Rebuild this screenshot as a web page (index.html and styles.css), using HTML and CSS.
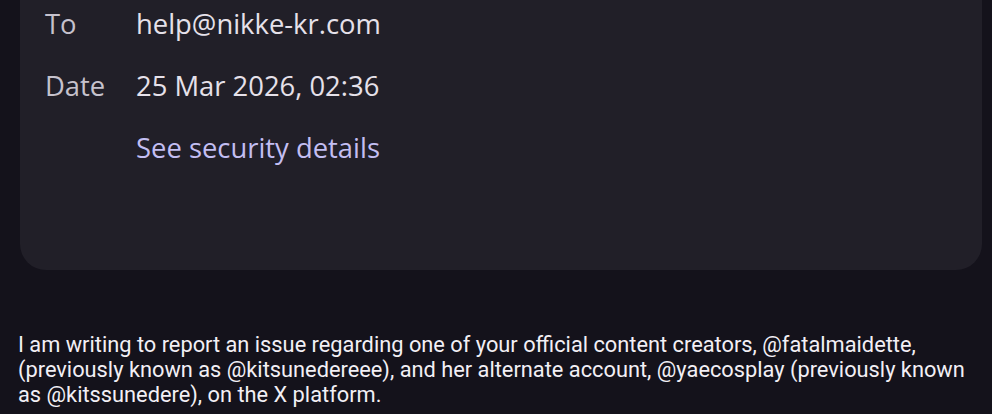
FILE: index.html
```html
<!DOCTYPE html>
<html>
<head>
<meta charset="utf-8">
<link rel="stylesheet" href="styles.css">
</head>
<body>
<div class="card">
  <div class="row"><span class="label">To</span><span class="value">help@nikke-kr.com</span></div>
  <div class="row"><span class="label">Date</span><span class="value">25 Mar 2026, 02:36</span></div>
  <div class="row"><span class="label"></span><span class="link">See security details</span></div>
</div>
<p class="body">I am writing to report an issue regarding one of your official content creators, @fatalmaidette, (previously known as @kitsunedereee), and her alternate account, @yaecosplay (previously known as @kitssunedere), on the X platform.</p>
</body>
</html>
```
FILE: styles.css
```css
html, body {
  margin: 0;
  padding: 0;
  background: #14121b;
  height: 414px;
  overflow: hidden;
}
body {
  font-family: Roboto, "Noto Sans", sans-serif;
}
.card {
  margin: -10px 10px 0 20px;
  background: #211f28;
  border-radius: 0 0 26px 26px;
  height: 280px;
  padding: 2px 25px 0;
  box-sizing: border-box;
}
.row {
  display: flex;
  height: 62px;
  align-items: center;
  font-family: "Open Sans", Roboto, sans-serif;
  font-size: 27.4px;
}
.label {
  width: 91px;
  color: #c6c2cd;
  flex: none;
}
.value {
  color: #e6e1ea;
}
.link {
  color: #c3bef2;
}
.body {
  margin: 0;
  padding: 62px 18px 0;
  font-size: 21.8px;
  line-height: 25px;
  color: #f2eff5;
}
```
